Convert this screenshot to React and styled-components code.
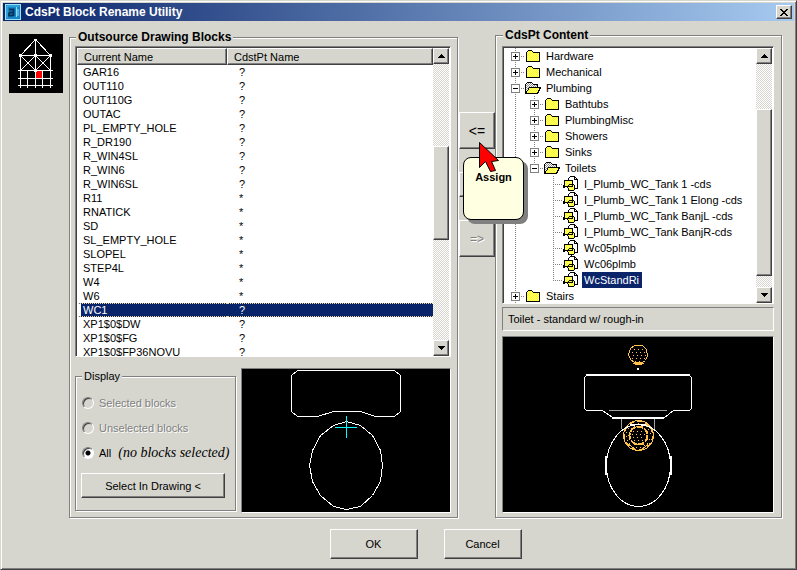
import React, { useState } from "react"
import styled, { createGlobalStyle, css } from "styled-components"

const face = "#d6d6ce"
const shade = "#808080"
const dark = "#404040"
const navy = "#0a246a"
const tan = "#ffc04c"

const GlobalStyle = createGlobalStyle`
	* {
		box-sizing: border-box;
	}
	body {
		margin: 0;
		background: ${face};
		color: #000;
		font: 11px/14px "Liberation Sans", Arial, sans-serif;
	}
	button, input {
		font: inherit;
		color: inherit;
	}
`

const raised = css`
	border: 1px solid;
	border-color: #fff ${dark} ${dark} #fff;
	box-shadow: inset -1px -1px 0 ${shade};
	background: ${face};
`
const etched = css`
	border: 1px solid ${shade};
	box-shadow: 1px 1px 0 #fff, inset 1px 1px 0 #fff;
`
const sunken = css`
	border: 1px solid;
	border-color: ${shade} #fff #fff ${shade};
`

const Dialog = styled.main`
	display: flex;
	flex-direction: column;
	height: 100vh;
	padding: 1px;
	border: 1px solid;
	border-color: ${face} ${dark} ${dark} ${face};
	box-shadow: inset 1px 1px 0 #fff, inset -1px -1px 0 ${shade};
	background: ${face};
`
const TitleBar = styled.header`
	display: flex;
	align-items: center;
	gap: 4px;
	height: 18px;
	margin: 1px;
	padding: 0 2px;
	flex: none;
	background: linear-gradient(to right, ${navy}, #a6caf0);
	color: #fff;
`
const Title = styled.h1`
	flex: 1;
	margin: 0;
	font-size: 12px;
	line-height: 18px;
	font-weight: bold;
`
const CloseButton = styled.button`
	${raised}
	display: flex;
	align-items: center;
	justify-content: center;
	width: 16px;
	height: 14px;
	padding: 0;
`
const Body = styled.div`
	display: grid;
	grid-template-columns: 60px 389fr 37fr 287fr;
	flex: 1;
	min-height: 0;
	padding: 6px 13px 0 7px;
`
const AppPicture = styled.svg`
	display: block;
	width: 54px;
	height: 59px;
	margin-top: 6px;
	background: #000;
`
const Group = styled.fieldset`
	${etched}
	display: flex;
	flex-direction: column;
	min-width: 0;
	min-height: 0;
	margin: ${p => (p.$low ? "2px 0 0" : "0")};
	padding: ${p => (p.$low ? "2px 6px 4px 5px" : "4px 7px 4px 6px")};
`
const Legend = styled.legend`
	margin-left: 1px;
	padding: 0 2px;
	background: ${face};
	font-size: 12px;
	line-height: 14px;
	font-weight: bold;
`
const ListBox = styled.div`
	${sunken}
	display: flex;
	flex: 1;
	min-height: 0;
	background: #fff;
	box-shadow: inset 1px 1px 0 ${dark};
	padding: 1px 1px 0;
`
const Viewport = styled.div`
	flex: 1;
	min-width: 0;
	overflow: hidden;
`
const Table = styled.table`
	width: 100%;
	table-layout: fixed;
	border-spacing: 0;
`
const HeadCell = styled.th`
	${raised}
	height: 17px;
	width: ${p => p.$width || "auto"};
	padding: 0 6px;
	line-height: 14px;
	font-weight: normal;
	text-align: left;
`
const Cell = styled.td`
	height: 14px;
	padding: 0 0 0 ${p => (p.$first ? "2px" : "12px")};
	border-left: ${p => (p.$first ? "4px solid #fff" : "0")};
	line-height: 14px;
	white-space: nowrap;
	${p => p.$selected && css`
		border-top: 1px dotted #f5db95;
		border-bottom: 1px dotted #f5db95;
		line-height: 12px;
		background: ${navy};
		color: #fff;
	`}
`

const Bar = styled.div`
	display: flex;
	flex-direction: column;
	flex: none;
	width: 16px;
	background: repeating-conic-gradient(#fff 0 25%, ${face} 0 50%) 0 0 / 2px 2px;
`
const BarButton = styled.button`
	${raised}
	display: flex;
	align-items: center;
	justify-content: center;
	flex: none;
	height: 16px;
	padding: 0;
`
const BarSpace = styled.div`
	flex: ${p => p.$part} 0 0;
`
const Thumb = styled(BarSpace)`
	${raised}
`

const Lower = styled.div`
	display: grid;
	grid-template-columns: 161px 1fr;
	gap: 5px;
	margin-top: 11px;
	flex: none;
`
const DisplayGroup = styled.fieldset`
	${etched}
	display: flex;
	flex-direction: column;
	min-width: 0;
	margin: 1px 0 2px;
	padding: 7px 5px 0;
`
const DisplayLegend = styled.legend`
	margin-left: 1px;
	padding: 0 2px;
	background: ${face};
	line-height: 14px;
`
const RadioRow = styled.label`
	display: flex;
	align-items: center;
	gap: 5px;
	height: 25px;
	padding-left: 1px;
	white-space: nowrap;
	${p => p.$off && css`
		color: ${shade};
		text-shadow: 1px 1px 0 #fff;
	`}
`
const Radio = styled.input`
	appearance: none;
	flex: none;
	width: 12px;
	height: 12px;
	margin: 0;
	border: 1px solid;
	border-color: ${shade} #fff #fff ${shade};
	border-radius: 50%;
	background: ${face};
	box-shadow: inset 1px 1px 0 ${dark};
	&:checked {
		background: radial-gradient(circle, #000 0 2px, #fff 3px);
	}
`
const Note = styled.i`
	margin-left: 2px;
	font: italic 14px/16px "Liberation Serif", "Times New Roman", serif;
`
const PushButton = styled.button`
	${raised}
	width: ${p => p.$width};
	height: ${p => p.$height};
	padding: 0;
`
const DrawingButton = styled(PushButton)`
	margin-top: 8px;
`
const Preview = styled.div`
	${sunken}
	height: ${p => p.$height};
	flex: none;
	padding: 1px;
	background: #000;
	svg {
		display: block;
		width: 100%;
		height: 100%;
	}
`

const Middle = styled.div`
	position: relative;
	display: flex;
	flex-direction: column;
	gap: 23px;
	padding: 84px 0 0 1px;
`
const MoveButton = styled.button`
	${raised}
	height: ${p => (p.$short ? "25px" : "37px")};
	padding: 0;
	font-size: 14px;
	&:disabled {
		font-size: 12px;
		color: ${shade};
		text-shadow: 1px 1px 0 #fff;
	}
`
const Tip = styled.div`
	position: absolute;
	z-index: 1;
	top: 129px;
	left: 5px;
	width: 61px;
	height: 63px;
	padding-top: 12px;
	border: 1px solid #000;
	border-radius: 8px;
	background: #ffffe1;
	box-shadow: 4px 4px 0 ${shade};
	text-align: center;
	font-weight: bold;
`
const Pointer = styled.svg`
	position: absolute;
	z-index: 2;
	top: 112px;
	left: 20px;
`

const Tree = styled.ul`
	margin: 0;
	padding: 0 0 0 2px;
	list-style: none;
`
const TreeRow = styled.li`
	display: flex;
	height: 16px;
	line-height: 16px;
	white-space: nowrap;
`
const down = "repeating-linear-gradient(#808080 0 1px, transparent 1px 2px) 9px 0"
const across = "repeating-linear-gradient(to right, #808080 0 1px, transparent 1px 2px) 9px 8px"
const Guide = styled.span`
	display: flex;
	align-items: center;
	justify-content: center;
	flex: none;
	width: 19px;
	background: ${p => ({
		none: "none",
		line: `${down} / 1px 100% no-repeat`,
		tee: `${down} / 1px 100% no-repeat, ${across} / 10px 1px no-repeat`,
		end: `${down} / 1px 9px no-repeat, ${across} / 10px 1px no-repeat`
	}[p.$kind])};
`
const Expander = styled.button`
	width: 9px;
	height: 9px;
	padding: 0;
	border: 1px solid ${shade};
	background:
		linear-gradient(#000, #000) 1px 3px / 5px 1px no-repeat,
		linear-gradient(#000, #000) 3px 1px / 1px ${p => (p.$open ? "0" : "5px")} no-repeat,
		#fff;
`
const ItemName = styled.span`
	margin-left: 3px;
	padding: 0 3px 0 2px;
	${p => p.$selected && css`
		background: ${navy};
		color: #fff;
	`}
`
const Description = styled.p`
	${sunken}
	flex: none;
	margin: 3px 0 5px;
	padding: 3px 5px;
	line-height: 16px;
`
const Footer = styled.footer`
	display: flex;
	justify-content: center;
	gap: 26px;
	flex: none;
	padding: 11px 0 9px 54px;
`

const blocks = [
	["GAR16", "?"], ["OUT110", "?"], ["OUT110G", "?"], ["OUTAC", "?"],
	["PL_EMPTY_HOLE", "?"], ["R_DR190", "?"], ["R_WIN4SL", "?"], ["R_WIN6", "?"],
	["R_WIN6SL", "?"], ["R11", "*"], ["RNATICK", "*"], ["SD", "*"],
	["SL_EMPTY_HOLE", "*"], ["SLOPEL", "*"], ["STEP4L", "*"], ["W4", "*"],
	["W6", "*"], ["WC1", "?"], ["XP1$0$DW", "?"], ["XP1$0$FG", "?"],
	["XP1$0$FP36NOVU", "?"]
]

const nodes = [
	{ name: "Hardware", icon: "folder", guides: ["tee"] },
	{ name: "Mechanical", icon: "folder", guides: ["tee"] },
	{ name: "Plumbing", icon: "open", gray: true, guides: ["tee"] },
	{ name: "Bathtubs", icon: "folder", guides: ["line", "tee"] },
	{ name: "PlumbingMisc", icon: "folder", guides: ["line", "tee"] },
	{ name: "Showers", icon: "folder", guides: ["line", "tee"] },
	{ name: "Sinks", icon: "folder", guides: ["line", "tee"] },
	{ name: "Toilets", icon: "open", gray: true, guides: ["line", "end"] },
	{ name: "I_Plumb_WC_Tank 1 -cds", icon: "block", guides: ["line", "none", "tee"] },
	{ name: "I_Plumb_WC_Tank 1 Elong -cds", icon: "block", guides: ["line", "none", "tee"] },
	{ name: "I_Plumb_WC_Tank BanjL -cds", icon: "block", guides: ["line", "none", "tee"] },
	{ name: "I_Plumb_WC_Tank BanjR-cds", icon: "block", guides: ["line", "none", "tee"] },
	{ name: "Wc05plmb", icon: "block", guides: ["line", "none", "tee"] },
	{ name: "Wc06plmb", icon: "block", guides: ["line", "none", "tee"] },
	{ name: "WcStandRi", icon: "block", guides: ["line", "none", "end"] },
	{ name: "Stairs", icon: "folder", guides: ["tee"] }
]

const NodeIcon = ({ kind, gray }) => (
	<svg width="16" height="16" viewBox="0 0 16 16" shapeRendering="crispEdges">
		<defs>
			<pattern id="yellow" width="2" height="2" patternUnits="userSpaceOnUse">
				<rect width="2" height="2" fill="#ffff00" />
				<path d="M0 0h1v1h-1zM1 1h1v1h-1z" fill="#ffff9c" />
			</pattern>
			<pattern id="gray" width="2" height="2" patternUnits="userSpaceOnUse">
				<rect width="2" height="2" fill="#fff" />
				<path d="M0 0h1v1h-1zM1 1h1v1h-1z" fill="#909090" />
			</pattern>
		</defs>
		{kind === "folder" && (
			<g>
				<path d="M1.5 13.5V4.5L3.5 2.5H6.5L8.5 4.5H14.5V13.5Z" fill="url(#yellow)" stroke="#000" />
			</g>
		)}
		{kind === "open" && (
			<g stroke="#000">
				<path d="M0.5 12.5V4.5L2.5 2.5H6.5L8.5 4.5H12.5V7.5" fill={gray ? "url(#gray)" : "url(#yellow)"} />
				<path d="M0.5 13.5L4.5 7.5H15.5L12.5 13.5Z" fill="url(#yellow)" />
			</g>
		)}
		{kind === "block" && (
			<g stroke="#000">
				<path d="M5.5 4.5V2.5L7.5 0.5H11.5L14.5 3.5V12.5H11.5" fill="#fff" />
				<path d="M11.5 0.5V3.5H14.5" fill="none" />
				<rect x="1.5" y="4.5" width="8" height="6" fill="url(#yellow)" />
				<circle cx="8.5" cy="11.5" r="3.5" fill="url(#yellow)" />
				<path d="M0 10.5H9.5V7.5" fill="none" />
				<path d="M0 9.5H2M0 11.5H2" />
			</g>
		)}
	</svg>
)

const Arrow = ({ up }) => (
	<svg width="7" height="4" viewBox="0 0 7 4" shapeRendering="crispEdges">
		<path d={up ? "M3 0h1v1h1v1h1v1h1v1H0V3h1V2h1V1h1z" : "M0 0h7v1h-1v1h-1v1h-1v1h-1V3h-1V2h-1V1h-1z"} />
	</svg>
)

const ScrollBar = ({ before, size, after }) => (
	<Bar>
		<BarButton aria-label="Scroll up"><Arrow up /></BarButton>
		<BarSpace $part={before} />
		<Thumb $part={size} />
		<BarSpace $part={after} />
		<BarButton aria-label="Scroll down"><Arrow /></BarButton>
	</Bar>
)

const TitleIcon = () => (
	<svg width="16" height="16" viewBox="0 0 16 16">
		<rect x="0.5" y="0.5" width="15" height="15" fill="#1887c8" stroke="#9fe0f8" />
		<path d="M2 14V2H14" fill="none" stroke="#49b9ea" />
		<path d="M4 5.5H8.5V12M8.5 8.5H5L4 9.5V11.5H8.5" fill="none" stroke="#06365f" strokeWidth="2" />
		<path d="M11.5 3V13M13 5V12" stroke="#8fdcf8" />
	</svg>
)

const HouseFrame = () => (
	<AppPicture viewBox="0 0 54 59" shapeRendering="crispEdges">
		<rect x="27" y="37" width="6" height="7" fill="#f00" />
		<g fill="none" stroke="#fff">
			<path d="M11.5 21.5L26.5 5.5L41.5 21.5M26.5 5V37M11.5 21.5H41.5" />
			<path d="M11.5 21.5L26.5 36.5L41.5 21.5M11.5 36.5L26.5 21.5L41.5 36.5" />
			<path d="M9 36.5H44M9 44.5H44M9 51.5H44" />
			<path d="M11.5 21V54M18.5 36V54M26.5 36V54M33.5 36V54M41.5 21V54" />
		</g>
		<path d="M25 5h3v2h-3zM10 20h3v3h-3zM25 20h3v3h-3zM40 20h3v3h-3zM18 28h2v2h-2zM33 28h2v2h-2zM25 35h3v3h-3z" fill="#fff" />
	</AppPicture>
)

const BlockDrawing = () => (
	<svg viewBox="1 0 206 141" fill="none" stroke="#fff" shapeRendering="crispEdges">
		<path d="M49.5 5.5L55.5 0.5H152.5L158.5 5.5V41.5L152.5 46.5H133.5L118.5 41.5H91.5L75.5 46.5H55.5L49.5 41.5Z" />
		<path d="M104.5 51.5L91.5 55.5L78.5 65.5L70.5 80.5L67.5 95.5L70.5 111.5L78.5 125.5L91.5 136.5L104.5 139.5L118.5 136.5L130.5 125.5L138.5 111.5L140.5 95.5L138.5 80.5L130.5 65.5L118.5 55.5Z" />
		<path d="M104.5 46V68M93 57.5H115" stroke="#0ff" />
	</svg>
)

const ContentDrawing = () => (
	<svg viewBox="1 1 268 173" fill="none" stroke="#fff" shapeRendering="crispEdges">
		<g stroke={tan}>
			<path d="M131.5 8.5H139.5L143.5 12.5L144.5 18.5L142.5 23.5L139.5 25.5H131.5L127.5 22.5L125.5 17.5L127.5 11.5Z" />
			<path d="M132 27.5H139M130 26.5H141" />
			<path d="M131 12.5H141M129 15.5H143M130 18.5H143M129 21.5H142M132 24.5H140" strokeDasharray="1 3" />
			<circle cx="135.5" cy="98.5" r="15" />
			<circle cx="135.5" cy="98.5" r="14" strokeDasharray="5 3" />
			<circle cx="135.5" cy="98.5" r="9" strokeWidth="2" strokeDasharray="7 1" />
			<circle cx="135.5" cy="98.5" r="12" strokeDasharray="1 3" />
			<path d="M130 94.5H142M129 97.5H142M130 100.5H142M131 103.5H141" strokeDasharray="1 3" />
			<path d="M126 107.5L131 111.5M145 107.5L140 111.5M131 107.5H141" />
		</g>
		<path d="M134 31h2v2h-2z" fill="#fff" stroke="none" />
		<path d="M83 38H187" strokeWidth="2" />
		<path d="M83.5 38.5L81.5 40.5V71.5L83.5 73.5H99.5L109.5 80.5M161.5 80.5L170.5 73.5H186.5L188.5 71.5V40.5L186.5 38.5" />
		<path d="M109 81H161" strokeWidth="2" />
		<path d="M106 73.5H164M118.5 82V92M151.5 82V92" stroke="#a0a0a0" />
		<ellipse cx="135.5" cy="128.5" rx="32" ry="41" />
		<path d="M103 119V138M168 119V138" strokeWidth="2" />
		<path d="M127 88H132M138 88H143" strokeWidth="2" />
	</svg>
)

export default function App() {
	const [block, setBlock] = useState("WC1")
	const [content, setContent] = useState("WcStandRi")

	return (
		<Dialog>
			<GlobalStyle />
			<TitleBar>
				<TitleIcon />
				<Title>CdsPt Block Rename Utility</Title>
				<CloseButton aria-label="Close">
					<svg width="8" height="7" viewBox="0 0 8 7" shapeRendering="crispEdges">
						<path d="M0 0h2v1h1v1h2V1h1V0h2v1H7v1H6v1H5v1h1v1h1v1h1v1H6V6H5V5H3v1H2v1H0V6h1V5h1V4h1V3H2V2H1V1H0z" />
					</svg>
				</CloseButton>
			</TitleBar>
			<Body>
				<HouseFrame />
				<Group $low>
					<Legend>Outsource Drawing Blocks</Legend>
					<ListBox>
						<Viewport>
							<Table>
								<thead>
									<tr>
										<HeadCell $width="150px">Current Name</HeadCell>
										<HeadCell>CdstPt Name</HeadCell>
									</tr>
								</thead>
								<tbody>
									{blocks.map(([name, mark]) => (
										<tr key={name} onClick={() => setBlock(name)}>
											<Cell $first $selected={name === block}>{name}</Cell>
											<Cell $selected={name === block}>{mark}</Cell>
										</tr>
									))}
								</tbody>
							</Table>
						</Viewport>
						<ScrollBar before={83} size={92} after={101} />
					</ListBox>
					<Lower>
						<DisplayGroup>
							<DisplayLegend>Display</DisplayLegend>
							<RadioRow $off>
								<Radio type="radio" name="display" disabled />
								Selected blocks
							</RadioRow>
							<RadioRow $off>
								<Radio type="radio" name="display" disabled />
								Unselected blocks
							</RadioRow>
							<RadioRow>
								<Radio type="radio" name="display" defaultChecked />
								All <Note>(no blocks selected)</Note>
							</RadioRow>
							<DrawingButton $width="144px" $height="25px">Select In Drawing &lt;</DrawingButton>
						</DisplayGroup>
						<Preview $height="145px"><BlockDrawing /></Preview>
					</Lower>
				</Group>
				<Middle>
					<MoveButton>&lt;=</MoveButton>
					<MoveButton $short aria-label="Clear" />
					<MoveButton disabled>=&gt;</MoveButton>
					<Tip role="tooltip">Assign</Tip>
					<Pointer width="22" height="34" viewBox="0 0 22 34">
						<path d="M1.5 2.5V27.5L7.5 21.5L12.5 31.5L17.5 30.5L13.5 21.5L20.5 20.5Z" fill="#f00" stroke="#000" />
					</Pointer>
				</Middle>
				<Group>
					<Legend>CdsPt Content</Legend>
					<ListBox>
						<Viewport>
							<Tree>
								{nodes.map(node => (
									<TreeRow key={node.name} onClick={() => setContent(node.name)}>
										{node.guides.map((kind, i) => (
											<Guide key={i} $kind={kind}>
												{node.icon !== "block" && i === node.guides.length - 1 && (
													<Expander $open={node.icon === "open"} aria-label={node.name} />
												)}
											</Guide>
										))}
										<NodeIcon kind={node.icon} gray={node.gray} />
										<ItemName $selected={node.name === content}>{node.name}</ItemName>
									</TreeRow>
								))}
							</Tree>
						</Viewport>
						<ScrollBar before={45} size={167} after={11} />
					</ListBox>
					<Description>Toilet - standard w/ rough-in</Description>
					<Preview $height="177px"><ContentDrawing /></Preview>
				</Group>
			</Body>
			<Footer>
				<PushButton $width="88px" $height="30px">OK</PushButton>
				<PushButton $width="78px" $height="30px">Cancel</PushButton>
			</Footer>
		</Dialog>
	)
}
